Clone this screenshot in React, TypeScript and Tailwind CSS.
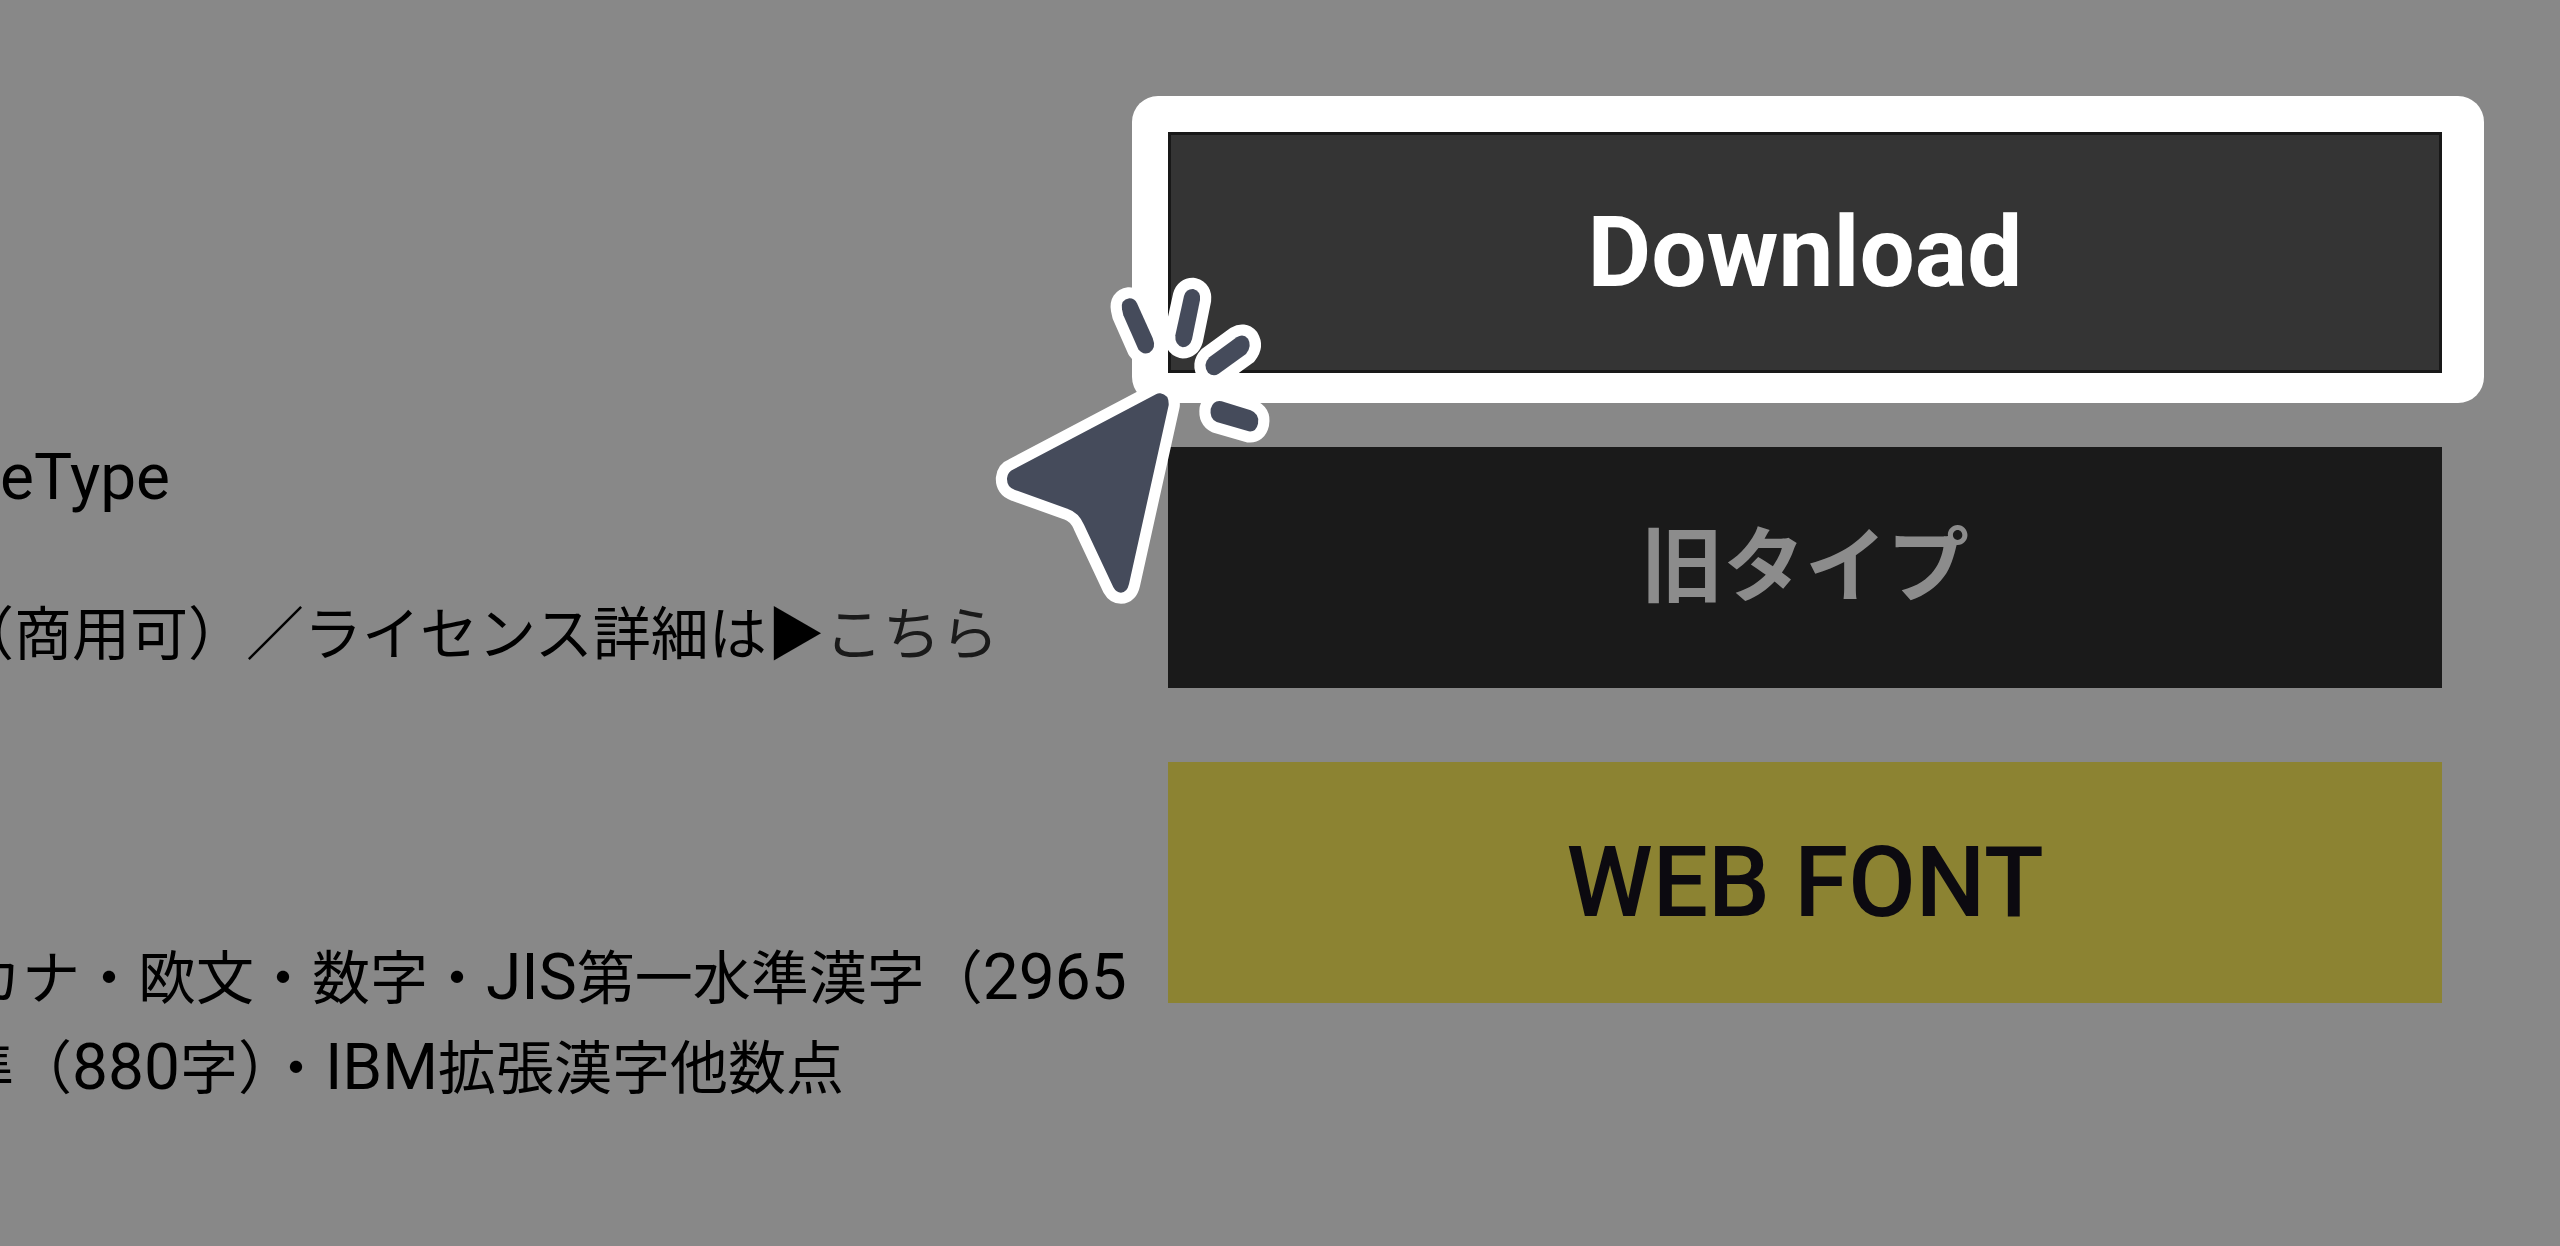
import { clsx } from "clsx";
import type { ReactNode } from "react";

interface ActionButtonProps {
  children: ReactNode;
  className?: string;
}

function ActionButton({ children, className }: ActionButtonProps) {
  return (
    <button
      type="button"
      className={clsx(
        "flex h-[241px] items-center justify-center whitespace-nowrap leading-none",
        className
      )}
    >
      {children}
    </button>
  );
}

// Latin letters and digits run a little larger than the kana around them
function Latin({ children }: { children: ReactNode }) {
  return <span className="font-[Roboto,sans-serif] text-[64px]">{children}</span>;
}

function ClickCursor() {
  const pointer =
    "M541 400 Q568 404 566 436 L447 972 Q441 998 423 998 Q409 998 400 982 L312 794 Q296 757 262 746 L105 690 Q80 682 81 655 Q83 635 101 628 L528 403 Q535 399 541 400 Z";
  // Short strokes fanning out from the tip
  const rays = [
    "M426 148 Q421 119 448 115 Q464 115 471 130 L518 234 Q530 264 508 278 Q488 286 475 268 L430 166 Z",
    "M612 108 Q618 86 640 87 Q663 93 660 120 L636 238 Q629 262 608 262 Q584 255 586 226 Z",
    "M770 232 Q790 220 804 236 Q817 258 798 282 L716 341 Q700 352 684 338 Q667 314 688 292 Z",
    "M725 424 L812 451 Q840 462 834 491 Q828 517 806 514 L710 486 Q688 476 692 447 Q700 419 725 424 Z",
  ];

  return (
    <svg
      viewBox="0 0 960 1080"
      className="pointer-events-none absolute -left-[152px] top-[164px] w-[320px]"
      aria-hidden="true"
    >
      <g fill="#fff" stroke="#fff" strokeWidth={67} strokeLinejoin="round">
        <path d={pointer} />
        {rays.map((ray) => (
          <path key={ray} d={ray} />
        ))}
      </g>
      <g fill="#454b5b">
        <path d={pointer} />
        {rays.map((ray) => (
          <path key={ray} d={ray} />
        ))}
      </g>
    </svg>
  );
}

export default function App() {
  return (
    <div className="grid min-h-screen grid-cols-[1132fr_1352fr] bg-[#888888] pr-[76px] font-['Noto_Sans_CJK_JP',sans-serif] text-black">
      <main className="min-w-0 overflow-hidden pt-[431px] text-[58px] leading-[86px] whitespace-nowrap">
        <p>
          <Latin>eType</Latin>
        </p>
        <p className="-ml-11 mt-[66px]">
          （商用可）／ライセンス詳細は▶
          <a href="#license" className="text-[#1a1a1a]">
            こちら
          </a>
        </p>
        <p className="-ml-9 mt-[258px]">
          カナ・欧文・数字・<Latin>JIS</Latin>第一水準漢字（<Latin>2965</Latin>
        </p>
        <p className="-ml-11">
          準（<Latin>880</Latin>字）・<Latin>IBM</Latin>拡張漢字他数点
        </p>
      </main>

      <aside className="flex flex-col pt-24">
        <div className="relative flex flex-col rounded-[26px] bg-white pt-9 pr-[42px] pb-[30px] pl-9">
          <ActionButton className="border-[3px] border-[#181818] bg-[#343434] font-[Roboto,sans-serif] text-[98px] font-bold text-white">
            Download
          </ActionButton>
          <ClickCursor />
        </div>
        <div className="mt-11 mr-[42px] ml-9 flex flex-col gap-[74px]">
          <ActionButton className="bg-[#1a1a1a] pb-4 text-[82px] font-bold text-[#8c8c8c]">
            旧タイプ
          </ActionButton>
          <ActionButton className="bg-[#8c8332] font-[Roboto,sans-serif] text-[98px] font-medium text-[#0c0a10]">
            WEB FONT
          </ActionButton>
        </div>
      </aside>
    </div>
  );
}
